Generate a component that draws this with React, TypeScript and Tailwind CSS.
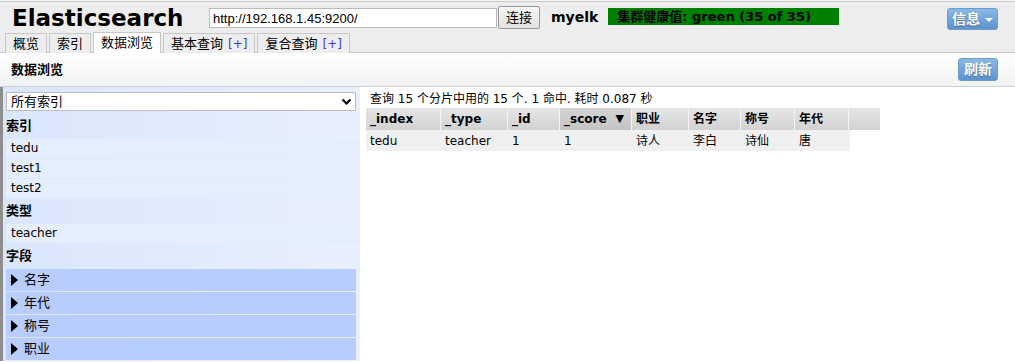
import React from 'react';

const tabs = [
  { label: '概览' },
  { label: '索引' },
  { label: '数据浏览', active: true },
  { label: '基本查询', plus: true },
  { label: '复合查询', plus: true },
];

const columns = [
  { key: '_index', w: 'w-[75px]' },
  { key: '_type', w: 'w-[67px]' },
  { key: '_id', w: 'w-[52px]' },
  { key: '_score', w: 'w-[72px]', sorted: true },
  { key: '职业', w: 'w-[57px]' },
  { key: '名字', w: 'w-[52px]' },
  { key: '称号', w: 'w-[54px]' },
  { key: '年代', w: 'w-[54px]' },
];

const row = ['tedu', 'teacher', '1', '1', '诗人', '李白', '诗仙', '唐'];

const fields = ['名字', '年代', '称号', '职业'];

const BlueButton: React.FC<{ children: React.ReactNode; className?: string }> = ({ children, className }) => (
  <button
    className={`flex items-center justify-center rounded-[3px] border border-[#6f9ccf] bg-gradient-to-b from-[#8cb8e6] to-[#5b93cc] text-[14px] font-bold text-white [text-shadow:0_1px_1px_rgba(0,0,0,0.35)] ${className ?? ''}`}
  >
    {children}
  </button>
);

export default function App() {
  return (
    <div className="h-[362px] w-[1015px] overflow-hidden bg-white font-['DejaVu_Sans','Noto_Sans_CJK_SC',sans-serif] text-[12px] text-black">
      {/* header */}
      <div className="bg-[#ededed]">
        <div className="h-px bg-[#f6f6f6]" />
        <div className="h-px bg-[#c9c9c9]" />
        <div className="flex h-[31px] items-start">
          <h1 className="ml-[12px] mt-[1px] w-[171px] text-[23px] font-bold leading-[30px]">Elasticsearch</h1>
          <input
            readOnly
            value="http://192.168.1.45:9200/"
            className="ml-[26px] mt-[6px] h-[20px] w-[288px] border border-[#bbb] bg-white px-[3px] font-['Liberation_Sans',sans-serif] text-[13px] outline-none"
          />
          <button className="ml-px mt-[4px] h-[23px] w-[42px] rounded-[2px] border border-[#999] bg-gradient-to-b from-[#f6f6f6] to-[#e2e2e2] text-[13px]">
            连接
          </button>
          <span className="ml-[11px] mt-[6px] text-[14px] font-bold leading-[18px]">myelk</span>
          <span className="ml-[10px] mt-[6px] h-[17px] w-[231px] bg-[#008000] pl-[9px] text-[13px] font-bold leading-[17px]">
            集群健康值: green (35 of 35)
          </span>
          <BlueButton className="ml-auto mr-[17px] mt-[6px] h-[22px] w-[51px] gap-[5px]">
            <span>信息</span>
            <span className="mt-[2px] h-0 w-0 border-x-[4px] border-t-[4px] border-x-transparent border-t-white" />
          </BlueButton>
        </div>
        {/* tabs */}
        <div className="flex h-[20px] items-end gap-[2px] border-b border-[#c8c8c8] pl-[5px]">
          {tabs.map((t) => (
            <div
              key={t.label}
              className={`-mb-px flex h-[20px] items-center border border-b-0 border-[#c8c8c8] px-[7px] text-[13px] ${
                t.active ? 'h-[21px] bg-white' : 'bg-[#ededed]'
              }`}
            >
              {t.label}
              {t.plus && <span className="ml-[5px] text-[12px] text-[#3b3bd6]">[+]</span>}
            </div>
          ))}
        </div>
      </div>

      {/* toolbar */}
      <div className="flex h-[34px] items-center justify-between border-b border-[#cfcfcf] bg-gradient-to-b from-white to-[#f1f2f3] pl-[11px] pr-[17px]">
        <span className="text-[13px] font-bold">数据浏览</span>
        <BlueButton className="h-[23px] w-[40px]">刷新</BlueButton>
      </div>

      {/* body */}
      <div className="flex h-[274px]">
        <div className="w-[360px] border-l-[3px] border-[#8e8e8e] bg-gradient-to-r from-[#dae6fb] to-[#e9f0fd] pl-[3px] pt-[5px]">
          <div className="flex h-[19px] w-[350px] items-center justify-between border border-[#bdbdbd] bg-white pl-[4px] pr-[3px] text-[13px]">
            <span>所有索引</span>
            <svg width="11" height="8" viewBox="0 0 11 8">
              <path d="M1.5 1.5 L5.5 5.5 L9.5 1.5" stroke="#000" strokeWidth="2.2" fill="none" />
            </svg>
          </div>

          <div className="mt-[6px] h-[18px] text-[13px] font-bold leading-[18px]">索引</div>
          <div className="mt-[4px] flex flex-col gap-px">
            {['tedu', 'test1', 'test2'].map((n) => (
              <div key={n} className="flex h-[19px] items-center rounded-l-[3px] bg-[#e5eefd] pl-[5px] text-[12px] leading-[19px]">
                {n}
              </div>
            ))}
          </div>

          <div className="mt-[4px] h-[18px] text-[13px] font-bold leading-[18px]">类型</div>
          <div className="mt-[4px] flex h-[19px] items-center rounded-l-[3px] bg-[#e5eefd] pl-[5px] text-[12px] leading-[19px]">
            teacher
          </div>

          <div className="mt-[4px] h-[18px] text-[13px] font-bold leading-[18px]">字段</div>
          <div className="mt-[4px] flex w-[350px] flex-col gap-px">
            {fields.map((f) => (
              <div key={f} className="flex h-[22px] items-center bg-[#b8cdfb] pl-[5px] text-[13px] leading-[22px]">
                <span className="mr-[6px] h-0 w-0 border-y-[6px] border-l-[7px] border-y-transparent border-l-black" />
                {f}
              </div>
            ))}
          </div>
        </div>

        <div className="pl-[6px] pt-[5px]">
          <div className="pl-[4px] text-[12px] leading-[15px]">查询 15 个分片中用的 15 个. 1 命中. 耗时 0.087 秒</div>
          <div className="mt-[1px] flex h-[22px]">
            {columns.map((c) => (
              <div
                key={c.key}
                className={`${c.w} flex items-center border-r border-[#f4f4f4] pl-[4px] text-[12px] font-bold ${
                  c.sorted ? 'bg-gradient-to-b from-[#d4d4d4] to-[#c4c4c4]' : 'bg-gradient-to-b from-[#e6e6e6] to-[#d2d2d2]'
                }`}
              >
                {c.key}
                {c.sorted && <span className="ml-[9px] text-[11px]">▼</span>}
              </div>
            ))}
            <div className="w-[31px] bg-gradient-to-b from-[#e6e6e6] to-[#d2d2d2]" />
          </div>
          <div className="flex h-[21px] w-[484px] bg-[#f0f0f0]">
            {row.map((v, i) => (
              <div key={i} className={`${columns[i].w} flex items-center pl-[4px] text-[12px]`}>
                {v}
              </div>
            ))}
          </div>
        </div>
      </div>
    </div>
  );
}
